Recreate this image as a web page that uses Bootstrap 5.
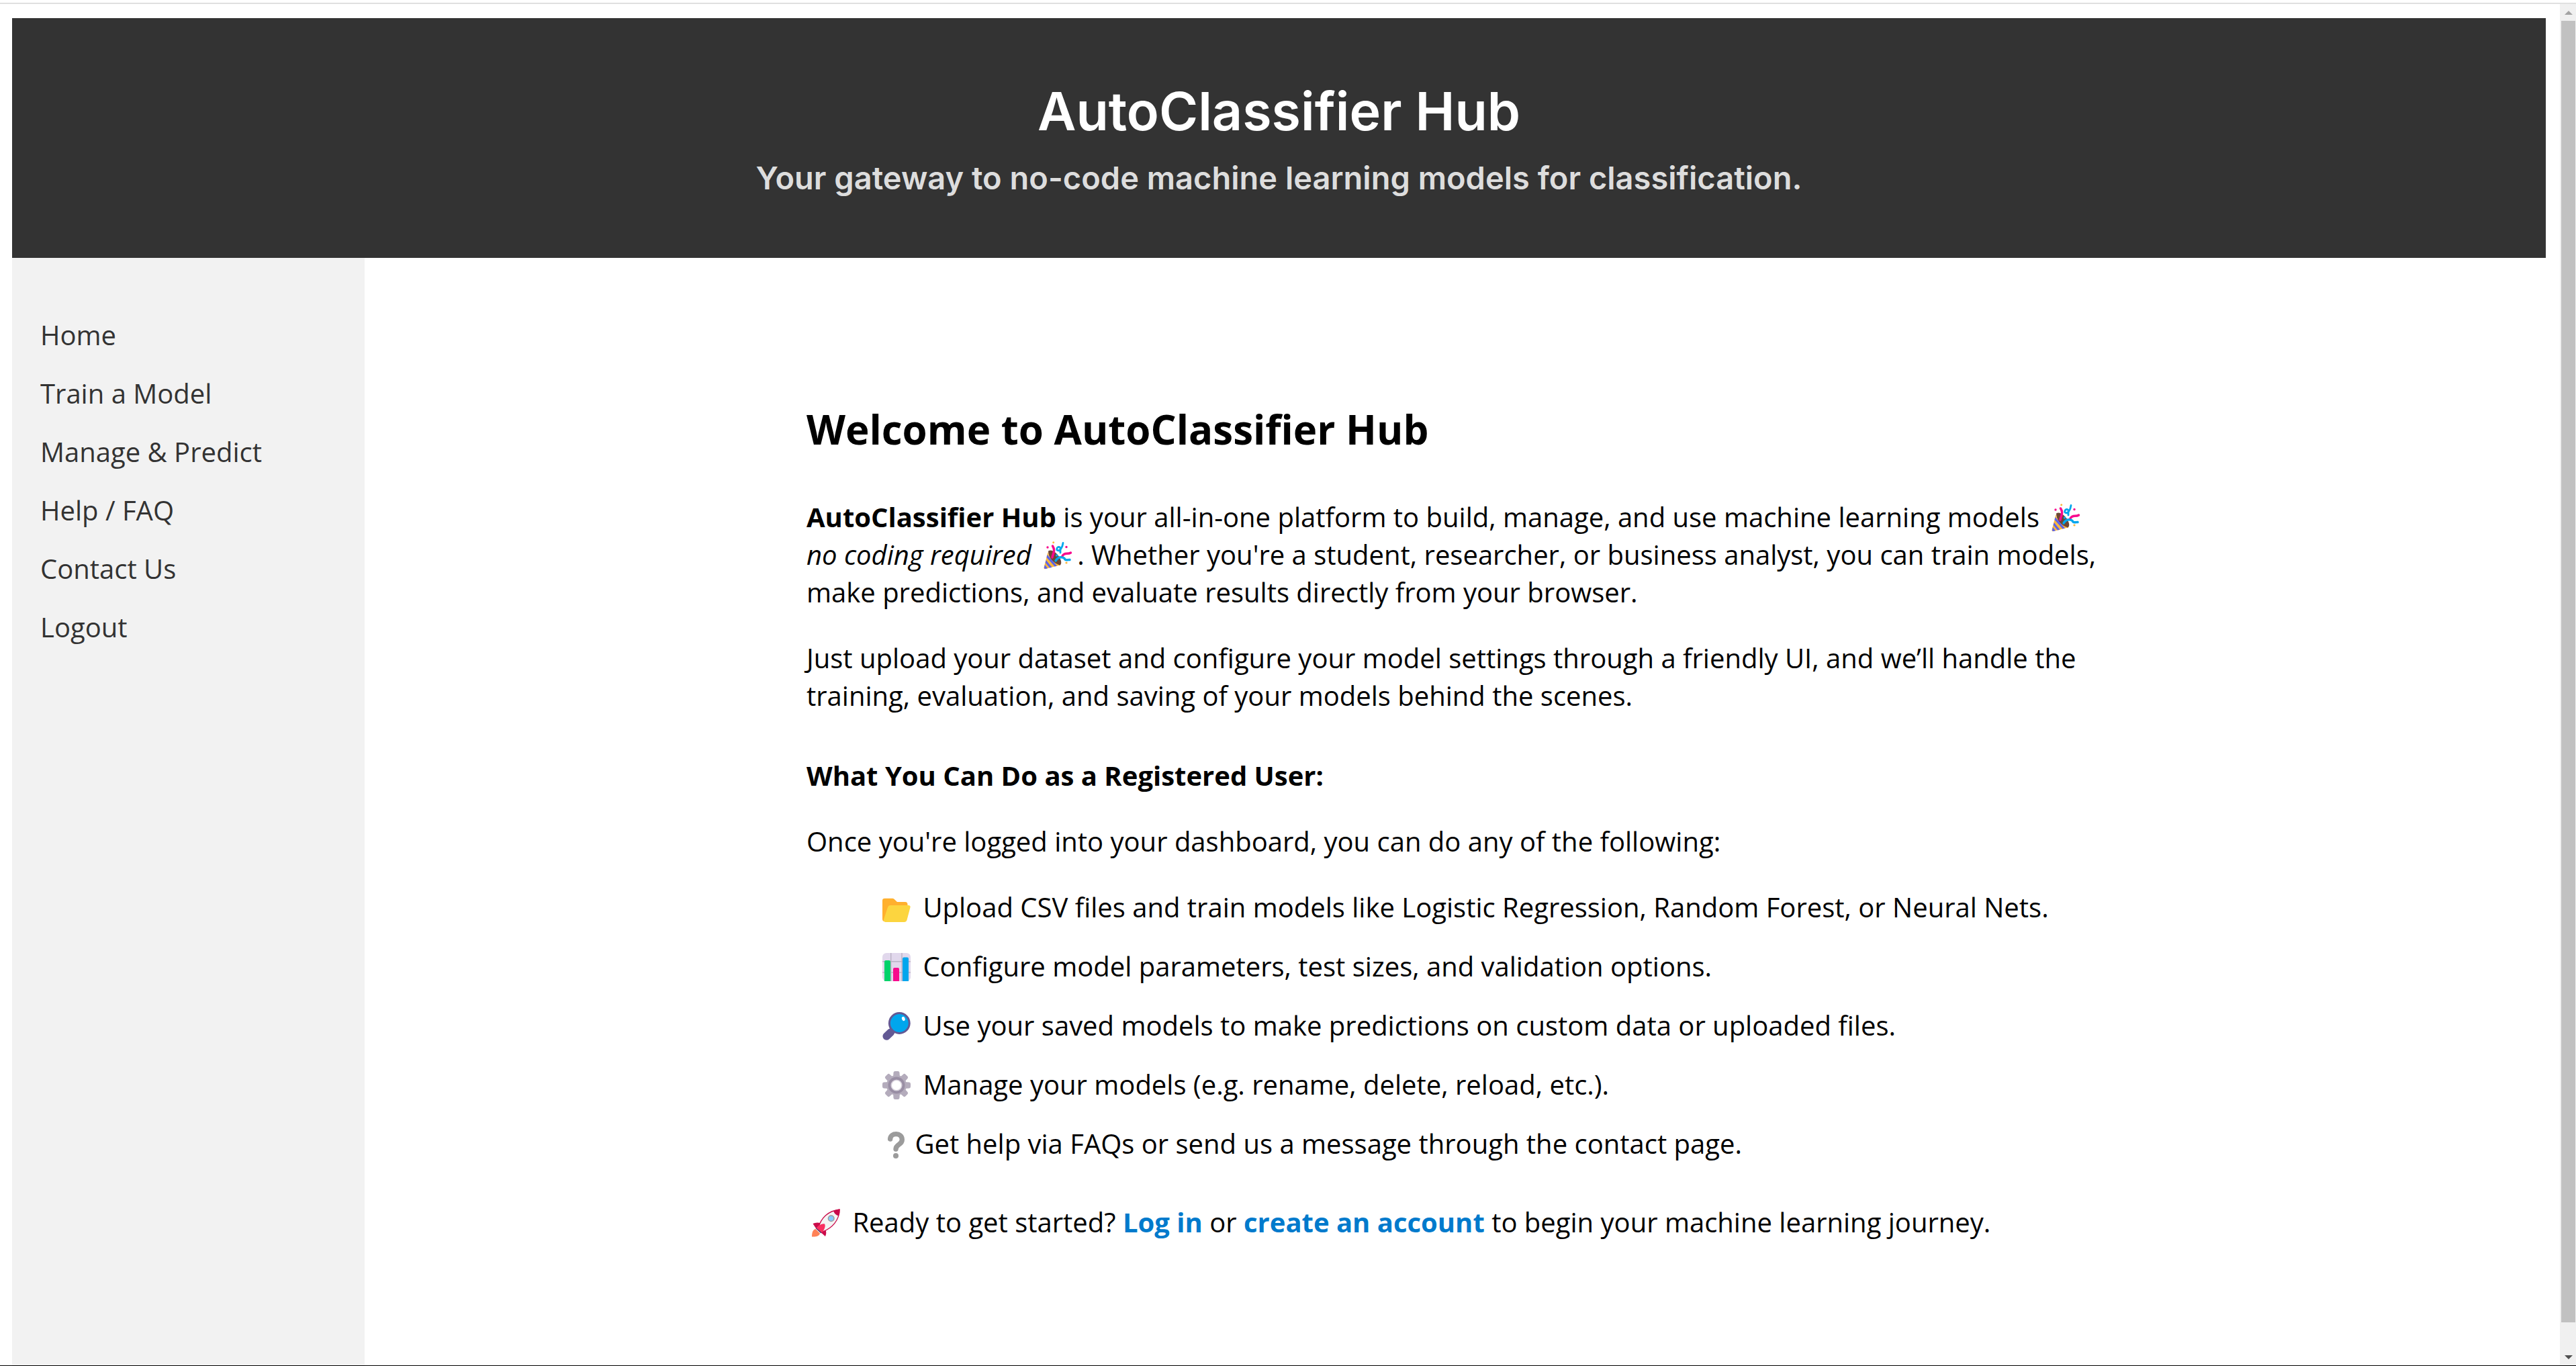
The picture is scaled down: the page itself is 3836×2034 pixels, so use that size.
<!DOCTYPE html>
<html lang="en">
<head>
<meta charset="utf-8">
<meta name="viewport" content="width=device-width, initial-scale=1">
<title>AutoClassifier Hub</title>
<link href="https://cdn.jsdelivr.net/npm/bootstrap@5.3.0/dist/css/bootstrap.min.css" rel="stylesheet">
<style>
  body { font: 40px/56px "Open Sans", "Noto Sans", sans-serif; color: #000; background: #fff; }
  .window-frame { border-bottom: 1px solid #000; padding-top: 4px; }
  .window-body { border-top: 2px solid #e0e0e0; }
  .page-area { padding: 21px 21px 0 18px; min-width: 0; }

  .site-header { background: #333; padding: 90px 24px 87px; font-family: Inter, sans-serif; }
  .site-header h1 { font-size: 79px; line-height: 96px; font-weight: 600; margin-bottom: 20px; }
  .site-header p { font-size: 47px; line-height: 64px; font-weight: 600; color: #ddd; }

  .side-menu { width: 525px; background: #f2f2f2; padding: 87px 42px; gap: 31px; }
  .side-menu .nav-link { padding: 0; color: #333; }
  .side-menu .nav-link:hover { text-decoration: underline; }

  .intro { max-width: 1932px; padding-top: 213px; padding-bottom: 63px; }
  .intro h2 { font-size: 60px; line-height: 84px; font-weight: 700; margin-bottom: 61px; }
  .intro h3 { font-size: 40px; line-height: 56px; font-weight: 700; margin: 63px 0 42px; }
  .intro p { margin-bottom: 42px; }
  .intro a { color: #007acc; font-weight: 700; text-decoration: none; }
  .feature-list { gap: 32px; padding-left: 105px; margin-bottom: 61px; }

  .emoji { width: 42px; height: 42px; margin: 0 8px; vertical-align: -7px; }
  .emoji-slim { width: 34px; margin-right: 4px; }

  .scroll-track { width: 24px; background: #f0f0f0; padding: 10px 1px 9px 2px; }
  .scroll-track svg { width: 12px; height: 6px; }
  .scroll-thumb { background: #c1c1c1; margin: 9px 0 49px; }
</style>
<script src="https://cdn.jsdelivr.net/npm/bootstrap@5.3.0/dist/js/bootstrap.bundle.min.js"></script>
</head>
<body>
<svg class="d-none" aria-hidden="true">
  <symbol id="party" viewBox="0 0 42 42">
    <path d="M7 14.500C12 11 20 17 24 24.500C27 30 27 34 24 36C15 34 7 25 7 14.500Z" fill="#6d4534"/>
    <path d="M6.500 16L.5 39Q.2 42 3 41L24.500 35.500C15 33 8 25 6.500 16Z" fill="#fcb83c"/>
    <path d="M5.500 20L20 36.700L16.500 37.600L4.500 24ZM3.700 28L12.500 38.700L9 39.600L2.700 31.800ZM1.900 35L6 40.300L3 41Q1.500 41.200 .8 39.500Z" fill="#5c63e8"/>
    <path d="M13.500 7C18 14 14 18 13 24" fill="none" stroke="#f70a8d" stroke-width="3.500" stroke-linecap="round"/>
    <path d="M28 22C31 16 36 20 40.500 17" fill="none" stroke="#f70a8d" stroke-width="3.500" stroke-linecap="round"/>
    <path d="M29 2.500C28 10 24 16 20 13C18 9 25 6 25 11L25 17" fill="none" stroke="#00a6ed" stroke-width="2.800" stroke-linecap="round"/>
    <path d="M18 29C23 21 31 24 32 27C34 29 37 27 39 27.500" fill="none" stroke="#00a6ed" stroke-width="3.500" stroke-linecap="round"/>
    <circle cx="14.700" cy="1.800" r="1.500" fill="#fcb83c"/><circle cx="34" cy="32" r="1.600" fill="#fcb83c"/>
    <circle cx="6" cy="9" r="1.700" fill="#f70a8d"/><circle cx="34" cy="8.500" r="1.700" fill="#f70a8d"/>
    <path d="M18 21h3" stroke="#00a6ed" stroke-width="3"/>
  </symbol>
</svg>

<div class="window-frame min-vh-100 d-flex flex-column">
  <div class="window-body flex-grow-1 d-flex">
    <div class="page-area flex-grow-1 d-flex flex-column">
      <header class="site-header text-center text-white">
        <h1>AutoClassifier Hub</h1>
        <p class="mb-0">Your gateway to no-code machine learning models for classification.</p>
      </header>

      <div class="d-flex flex-grow-1">
        <nav class="side-menu nav flex-column flex-nowrap flex-shrink-0" aria-label="Main">
          <a class="nav-link" href="#home">Home</a>
          <a class="nav-link" href="#train">Train a Model</a>
          <a class="nav-link" href="#manage">Manage &amp; Predict</a>
          <a class="nav-link" href="#help">Help / FAQ</a>
          <a class="nav-link" href="#contact">Contact Us</a>
          <a class="nav-link" href="#logout">Logout</a>
        </nav>

        <main class="flex-grow-1">
          <div class="intro mx-auto">
            <h2>Welcome to AutoClassifier Hub</h2>
            <p><strong>AutoClassifier Hub</strong> is your all-in-one platform to build, manage, and use machine learning models <svg class="emoji" role="img" aria-label="party popper"><use href="#party"/></svg> <em>no coding required</em> <svg class="emoji" role="img" aria-label="party popper"><use href="#party"/></svg>. Whether you're a student, researcher, or business analyst, you can train models, make predictions, and evaluate results directly from your browser.</p>
            <p>Just upload your dataset and configure your model settings through a friendly UI, and we’ll handle the training, evaluation, and saving of your models behind the scenes.</p>

            <h3>What You Can Do as a Registered User:</h3>
            <p>Once you're logged into your dashboard, you can do any of the following:</p>

            <ul class="feature-list list-unstyled d-flex flex-column">
              <li>
                <svg class="emoji" viewBox="0 0 42 42" aria-hidden="true">
                  <path d="M0 10Q0 6.700 3.500 6.700H15Q16.500 6.700 17.500 7.700L22 12H34Q37.500 12 37.500 16V30L6 41H3Q0 41 0 37Z" fill="#ffb02e"/>
                  <path d="M12 17H39.500Q42 17.500 41.500 20L36.500 39Q35.500 42 32.500 42H4.500Q1 41.500 2 38L8 20Q9 17 12 17Z" fill="#fcd53f"/>
                </svg>
                Upload CSV files and train models like Logistic Regression, Random Forest, or Neural Nets.
              </li>
              <li>
                <svg class="emoji" viewBox="0 0 42 42" aria-hidden="true">
                  <rect width="42" height="42" rx="6" fill="#e1d8ec"/>
                  <path d="M12.700 0V42M29 0V42M0 12.700H42M0 29H42" stroke="#b9b1c4" stroke-width="1.400"/>
                  <path d="M3 42V13Q3 11 5 11H10Q12 11 12 13V42Z" fill="#00d26a"/>
                  <path d="M16 42V24Q16 22 18 22H23Q25 22 25 24V42Z" fill="#f70a8d"/>
                  <path d="M30 42V8.500Q30 6.500 32 6.500H37Q39 6.500 39 8.500V42Z" fill="#00a6ed"/>
                </svg>
                Configure model parameters, test sizes, and validation options.
              </li>
              <li>
                <svg class="emoji" viewBox="0 0 42 42" aria-hidden="true">
                  <path d="M6.200 36L12.500 30" stroke="#635994" stroke-width="11.500" stroke-linecap="round"/>
                  <circle cx="25.300" cy="16.500" r="14.900" fill="#00a6ed" stroke="#635994" stroke-width="3"/>
                  <ellipse cx="31.300" cy="10" rx="2.300" ry="3.200" fill="#fff" transform="rotate(-20 31.300 10)"/>
                </svg>
                Use your saved models to make predictions on custom data or uploaded files.
              </li>
              <li>
                <svg class="emoji" viewBox="0 0 42 42" aria-hidden="true">
                  <g fill="#b4acbc">
                    <path id="teeth" d="M16 10L16.500 2Q16.700 0 19 0H23Q25.300 0 25.500 2L26 10V32L25.500 40Q25.300 42 23 42H19Q16.700 42 16.500 40L16 32Z"/>
                    <use href="#teeth" transform="rotate(45 21 21)"/>
                    <use href="#teeth" transform="rotate(90 21 21)"/>
                    <use href="#teeth" transform="rotate(135 21 21)"/>
                    <circle cx="21" cy="21" r="15"/>
                  </g>
                  <circle cx="21" cy="21" r="12.500" fill="#998ea4"/>
                  <circle cx="21" cy="21" r="8.600" fill="#d8d2dd"/>
                  <circle cx="21" cy="21" r="7" fill="#fff"/>
                </svg>
                Manage your models (e.g. rename, delete, reload, etc.).
              </li>
              <li>
                <svg class="emoji emoji-slim" viewBox="0 0 34 42" aria-hidden="true">
                  <path d="M11.600 13C12 3 29.300 3 29.300 14C29.300 22 20 20.500 20 28" fill="none" stroke="#9b9b9b" stroke-width="7.400" stroke-linecap="round"/>
                  <circle cx="20" cy="38" r="4" fill="#9b9b9b"/>
                </svg>
                Get help via FAQs or send us a message through the contact page.
              </li>
            </ul>

            <p>
              <svg class="emoji" viewBox="0 0 42 42" aria-hidden="true">
                <path d="M0 41.500C0 36 1 31 5.500 30L12 36.500C11 41 5 42 0 41.500Z" fill="#ff8257"/>
                <path d="M1.500 22Q6 19.500 13 21L20 30Q22.500 36 20 41L15.500 37L5 27.500Z" fill="#ca0b4a"/>
                <path d="M10 28C13 14 24 3 41 1C41 17 30 29 16 34Z" fill="#f4f4f4" stroke="#ca0b4a" stroke-width="1.300"/>
                <path d="M32 3Q37 .5 41.700 .5Q42 6 40 10.500Q34 9 32 3Z" fill="#ca0b4a"/>
                <path d="M5.500 29L13.500 36.500L15 34L8 26.500Z" fill="#533566"/>
                <path d="M6.500 28.500C9 25 15 21.500 19 22.500C21 26 18 32 15 35.500Z" fill="#f92f60"/>
                <circle cx="28.700" cy="14.200" r="4.300" fill="#83cbff" stroke="#9b9b9b" stroke-width="1.500"/>
              </svg>
              Ready to get started? <a href="#login">Log in</a> or <a href="#signup">create an account</a> to begin your machine learning journey.
            </p>
          </div>
        </main>
      </div>
    </div>

    <div class="scroll-track d-flex flex-column align-items-stretch flex-shrink-0" aria-hidden="true">
      <svg class="align-self-center" viewBox="0 0 12 6"><path d="M0 6L6 0L12 6Z" fill="#a3a3a3"/></svg>
      <div class="scroll-thumb flex-grow-1"></div>
      <svg class="align-self-center" viewBox="0 0 12 6"><path d="M0 0L6 6L12 0Z" fill="#505050"/></svg>
    </div>
  </div>
</div>
</body>
</html>
